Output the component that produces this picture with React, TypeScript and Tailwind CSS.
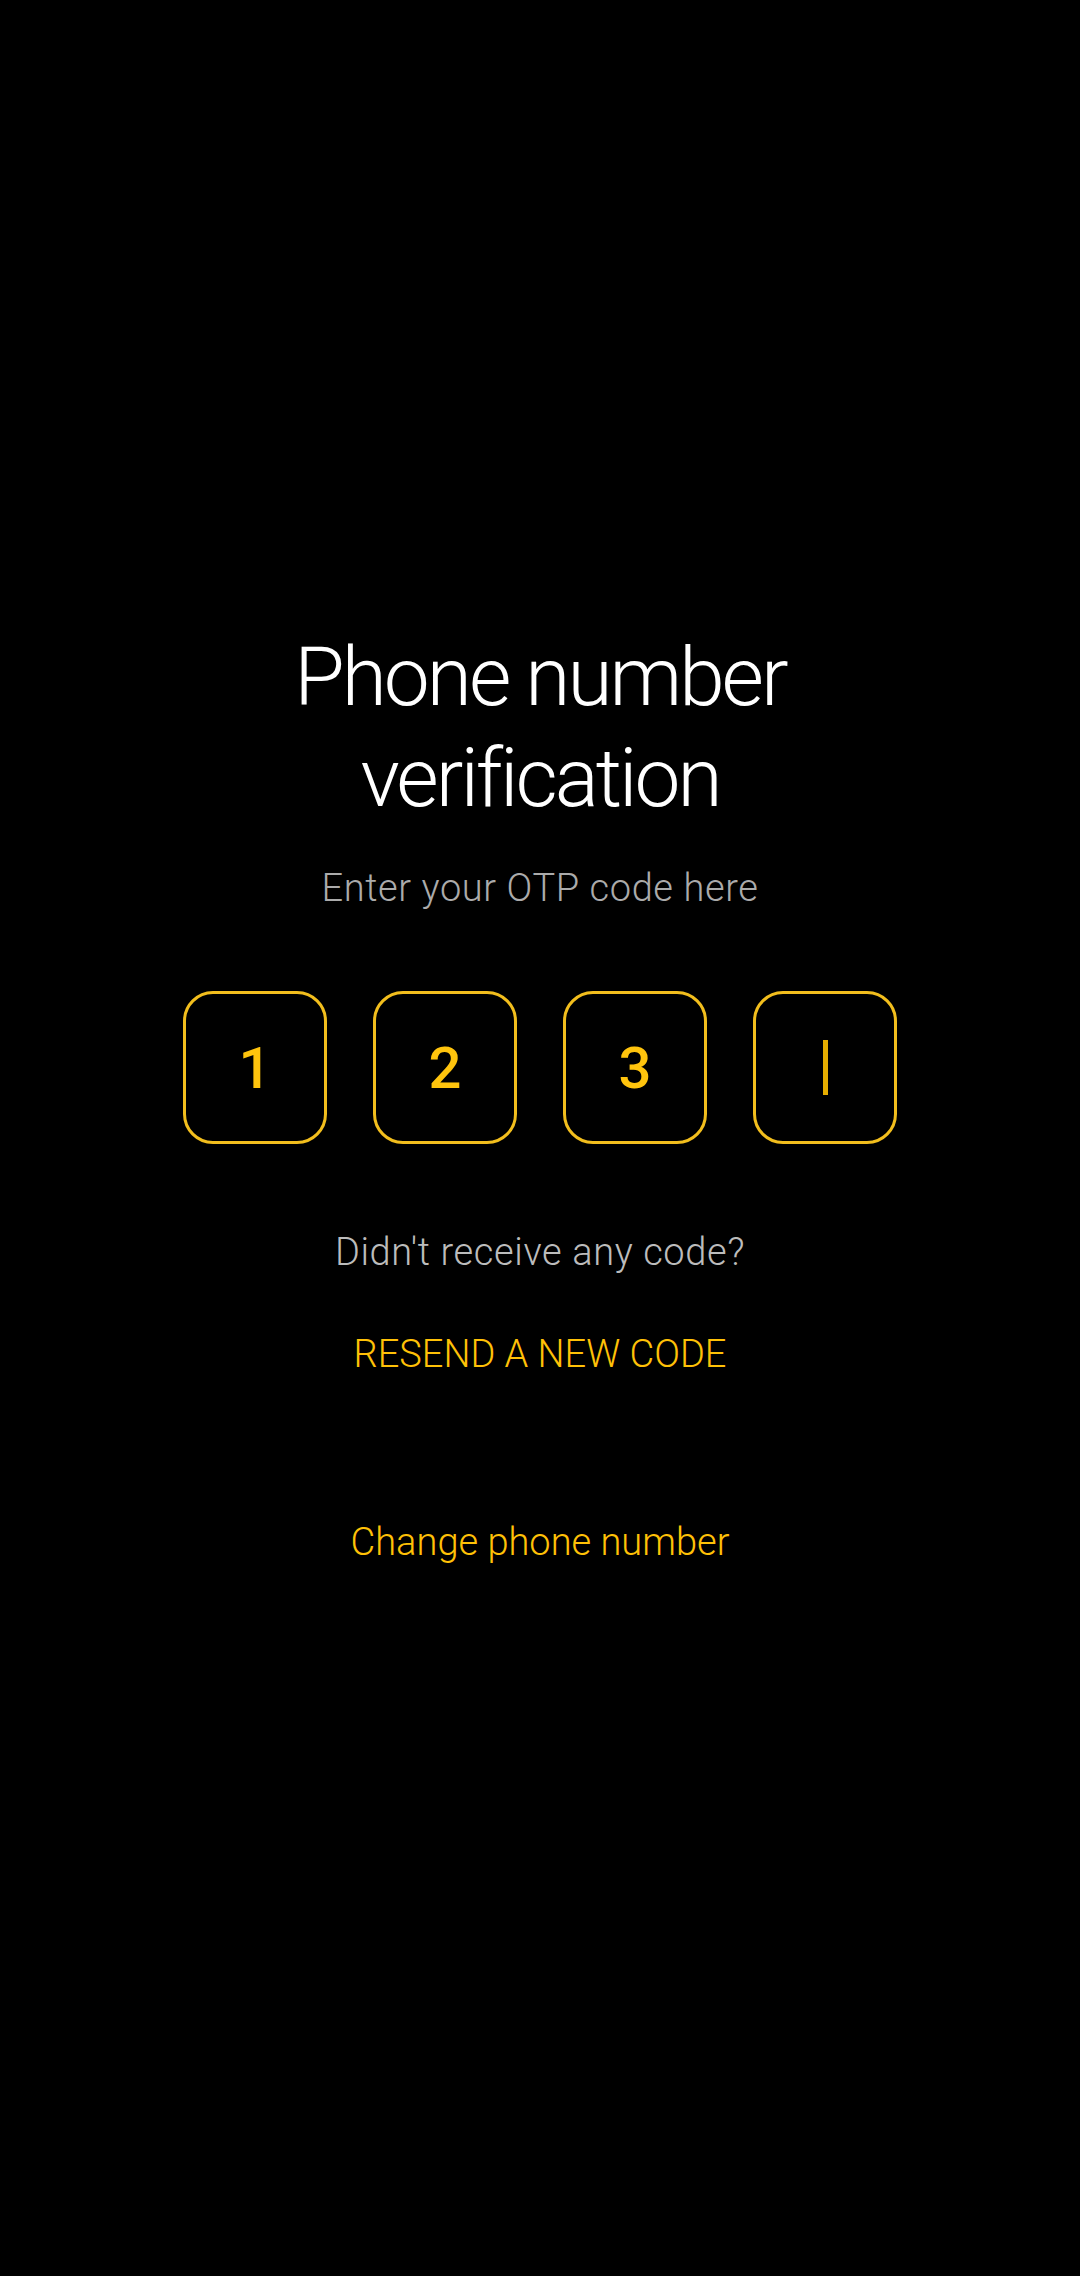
const digits = ["1", "2", "3"];

const OtpBox = ({ value, active }: { value?: string; active?: boolean }) => (
  <div className="flex h-[153px] w-[144px] items-center justify-center rounded-[30px] border-[3px] border-[#f2be1d]">
    {active ? (
      <span className="block h-[55px] w-[5px] bg-[#e6ad00]" />
    ) : (
      <span className="text-[58px] font-medium leading-none text-[#ffc40d]">{value}</span>
    )}
  </div>
);

export default function App() {
  return (
    <div
      className="flex min-h-[2276px] w-full flex-col items-center bg-black pt-[627px] text-center"
      style={{ fontFamily: "Roboto, 'Open Sans', sans-serif" }}
    >
      <h1 className="w-[700px] text-[82px] font-light leading-[101px] tracking-[-3px] text-white">
        Phone number verification
      </h1>
      <p className="mt-[35px] text-[38px] font-light leading-[48px] tracking-[0.6px] text-[#ababab]">
        Enter your OTP code here
      </p>

      <div className="mt-[79px] flex gap-[46px]">
        {digits.map((d) => (
          <OtpBox key={d} value={d} />
        ))}
        <OtpBox active />
      </div>

      <p className="mt-[84px] text-[38px] font-light leading-[48px] tracking-[0.6px] text-[#bcbcbc]">
        Didn't receive any code?
      </p>
      <button className="mt-[54px] text-[38px] font-light leading-[48px] tracking-[0px] text-[#ffc107]">
        RESEND A NEW CODE
      </button>
      <button className="mt-[140px] text-[38px] font-light leading-[48px] tracking-[0px] text-[#ffc107]">
        Change phone number
      </button>
    </div>
  );
}
